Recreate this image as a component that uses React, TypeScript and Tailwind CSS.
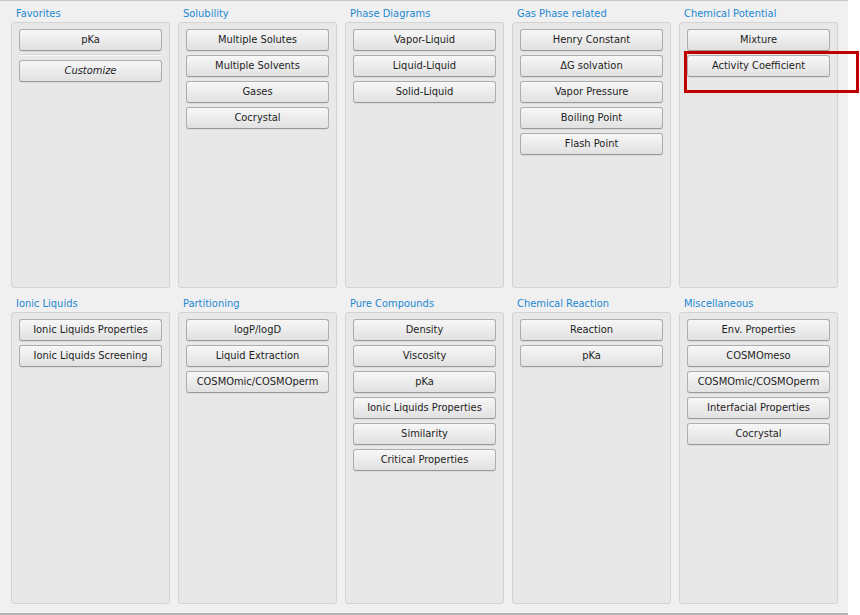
import React from "react";

type Group = { title: string; items: string[]; fav?: boolean };

const row1: Group[] = [
  { title: "Favorites", items: ["pKa"], fav: true },
  { title: "Solubility", items: ["Multiple Solutes", "Multiple Solvents", "Gases", "Cocrystal"] },
  { title: "Phase Diagrams", items: ["Vapor-Liquid", "Liquid-Liquid", "Solid-Liquid"] },
  { title: "Gas Phase related", items: ["Henry Constant", "ΔG solvation", "Vapor Pressure", "Boiling Point", "Flash Point"] },
  { title: "Chemical Potential", items: ["Mixture", "Activity Coefficient"] },
];

const row2: Group[] = [
  { title: "Ionic Liquids", items: ["Ionic Liquids Properties", "Ionic Liquids Screening"] },
  { title: "Partitioning", items: ["logP/logD", "Liquid Extraction", "COSMOmic/COSMOperm"] },
  { title: "Pure Compounds", items: ["Density", "Viscosity", "pKa", "Ionic Liquids Properties", "Similarity", "Critical Properties"] },
  { title: "Chemical Reaction", items: ["Reaction", "pKa"] },
  { title: "Miscellaneous", items: ["Env. Properties", "COSMOmeso", "COSMOmic/COSMOperm", "Interfacial Properties", "Cocrystal"] },
];

function Btn({ label, italic }: { label: string; italic?: boolean }) {
  return (
    <div
      className={
        "h-[22px] w-[143px] flex items-center justify-center rounded-[3px] border border-[#adadad] border-b-[#999999] bg-gradient-to-b from-[#f7f7f7] to-[#e1e1e1] text-[11px] text-[#1e1e1e] shadow-[0_1px_0_rgba(0,0,0,0.06)] " +
        (italic ? "italic" : "")
      }
    >
      {label}
    </div>
  );
}

function Panel({ g, h }: { g: Group; h: string }) {
  return (
    <div className="flex flex-col w-[159px]">
      <div className="h-[16px] flex items-center pt-[2px] pl-[5px] text-[11px] text-[#1c88d2]">{g.title}</div>
      <div className={"mt-px rounded-[3px] border border-[#d3d3d3] bg-[#e8e8e8] flex flex-col items-center pt-[6px] " + h}>
        {g.fav ? (
          <div className="flex flex-col items-center">
            <Btn label="pKa" />
            <div className="mt-[3px] w-[143px] h-[2px] border-t border-[#dadada] border-b border-b-[#f6f6f6]" />
            <div className="mt-[4px]">
              <Btn label="Customize" italic />
            </div>
          </div>
        ) : (
          <div className="flex flex-col gap-[4px]">
            {g.items.map((it, i) => (
              <Btn key={i} label={it} />
            ))}
          </div>
        )}
      </div>
    </div>
  );
}

export default function App() {
  return (
    <div
      className="relative w-[860px] h-[615px] bg-white overflow-hidden"
      style={{ fontFamily: '"DejaVu Sans Condensed", "DejaVu Sans", "Liberation Sans", sans-serif', fontStretch: "condensed" }}
    >
      <div className="w-[848px] h-[613px] bg-[#f0f0f0] border-t border-[#c8c8c8] pt-[4px] pl-[11px] flex flex-col">
        <div className="flex gap-[8px]">
          {row1.map((g, i) => (
            <Panel key={i} g={g} h="h-[266px]" />
          ))}
        </div>
        <div className="flex gap-[8px] mt-[7px]">
          {row2.map((g, i) => (
            <Panel key={i} g={g} h="h-[292px]" />
          ))}
        </div>
      </div>
      <div className="w-[848px] h-[2px] bg-[#b4b4b4]" />
      <div className="absolute left-[684px] top-[51px] w-[175px] h-[42px] border-[3px] border-[#c00000]" />
    </div>
  );
}
